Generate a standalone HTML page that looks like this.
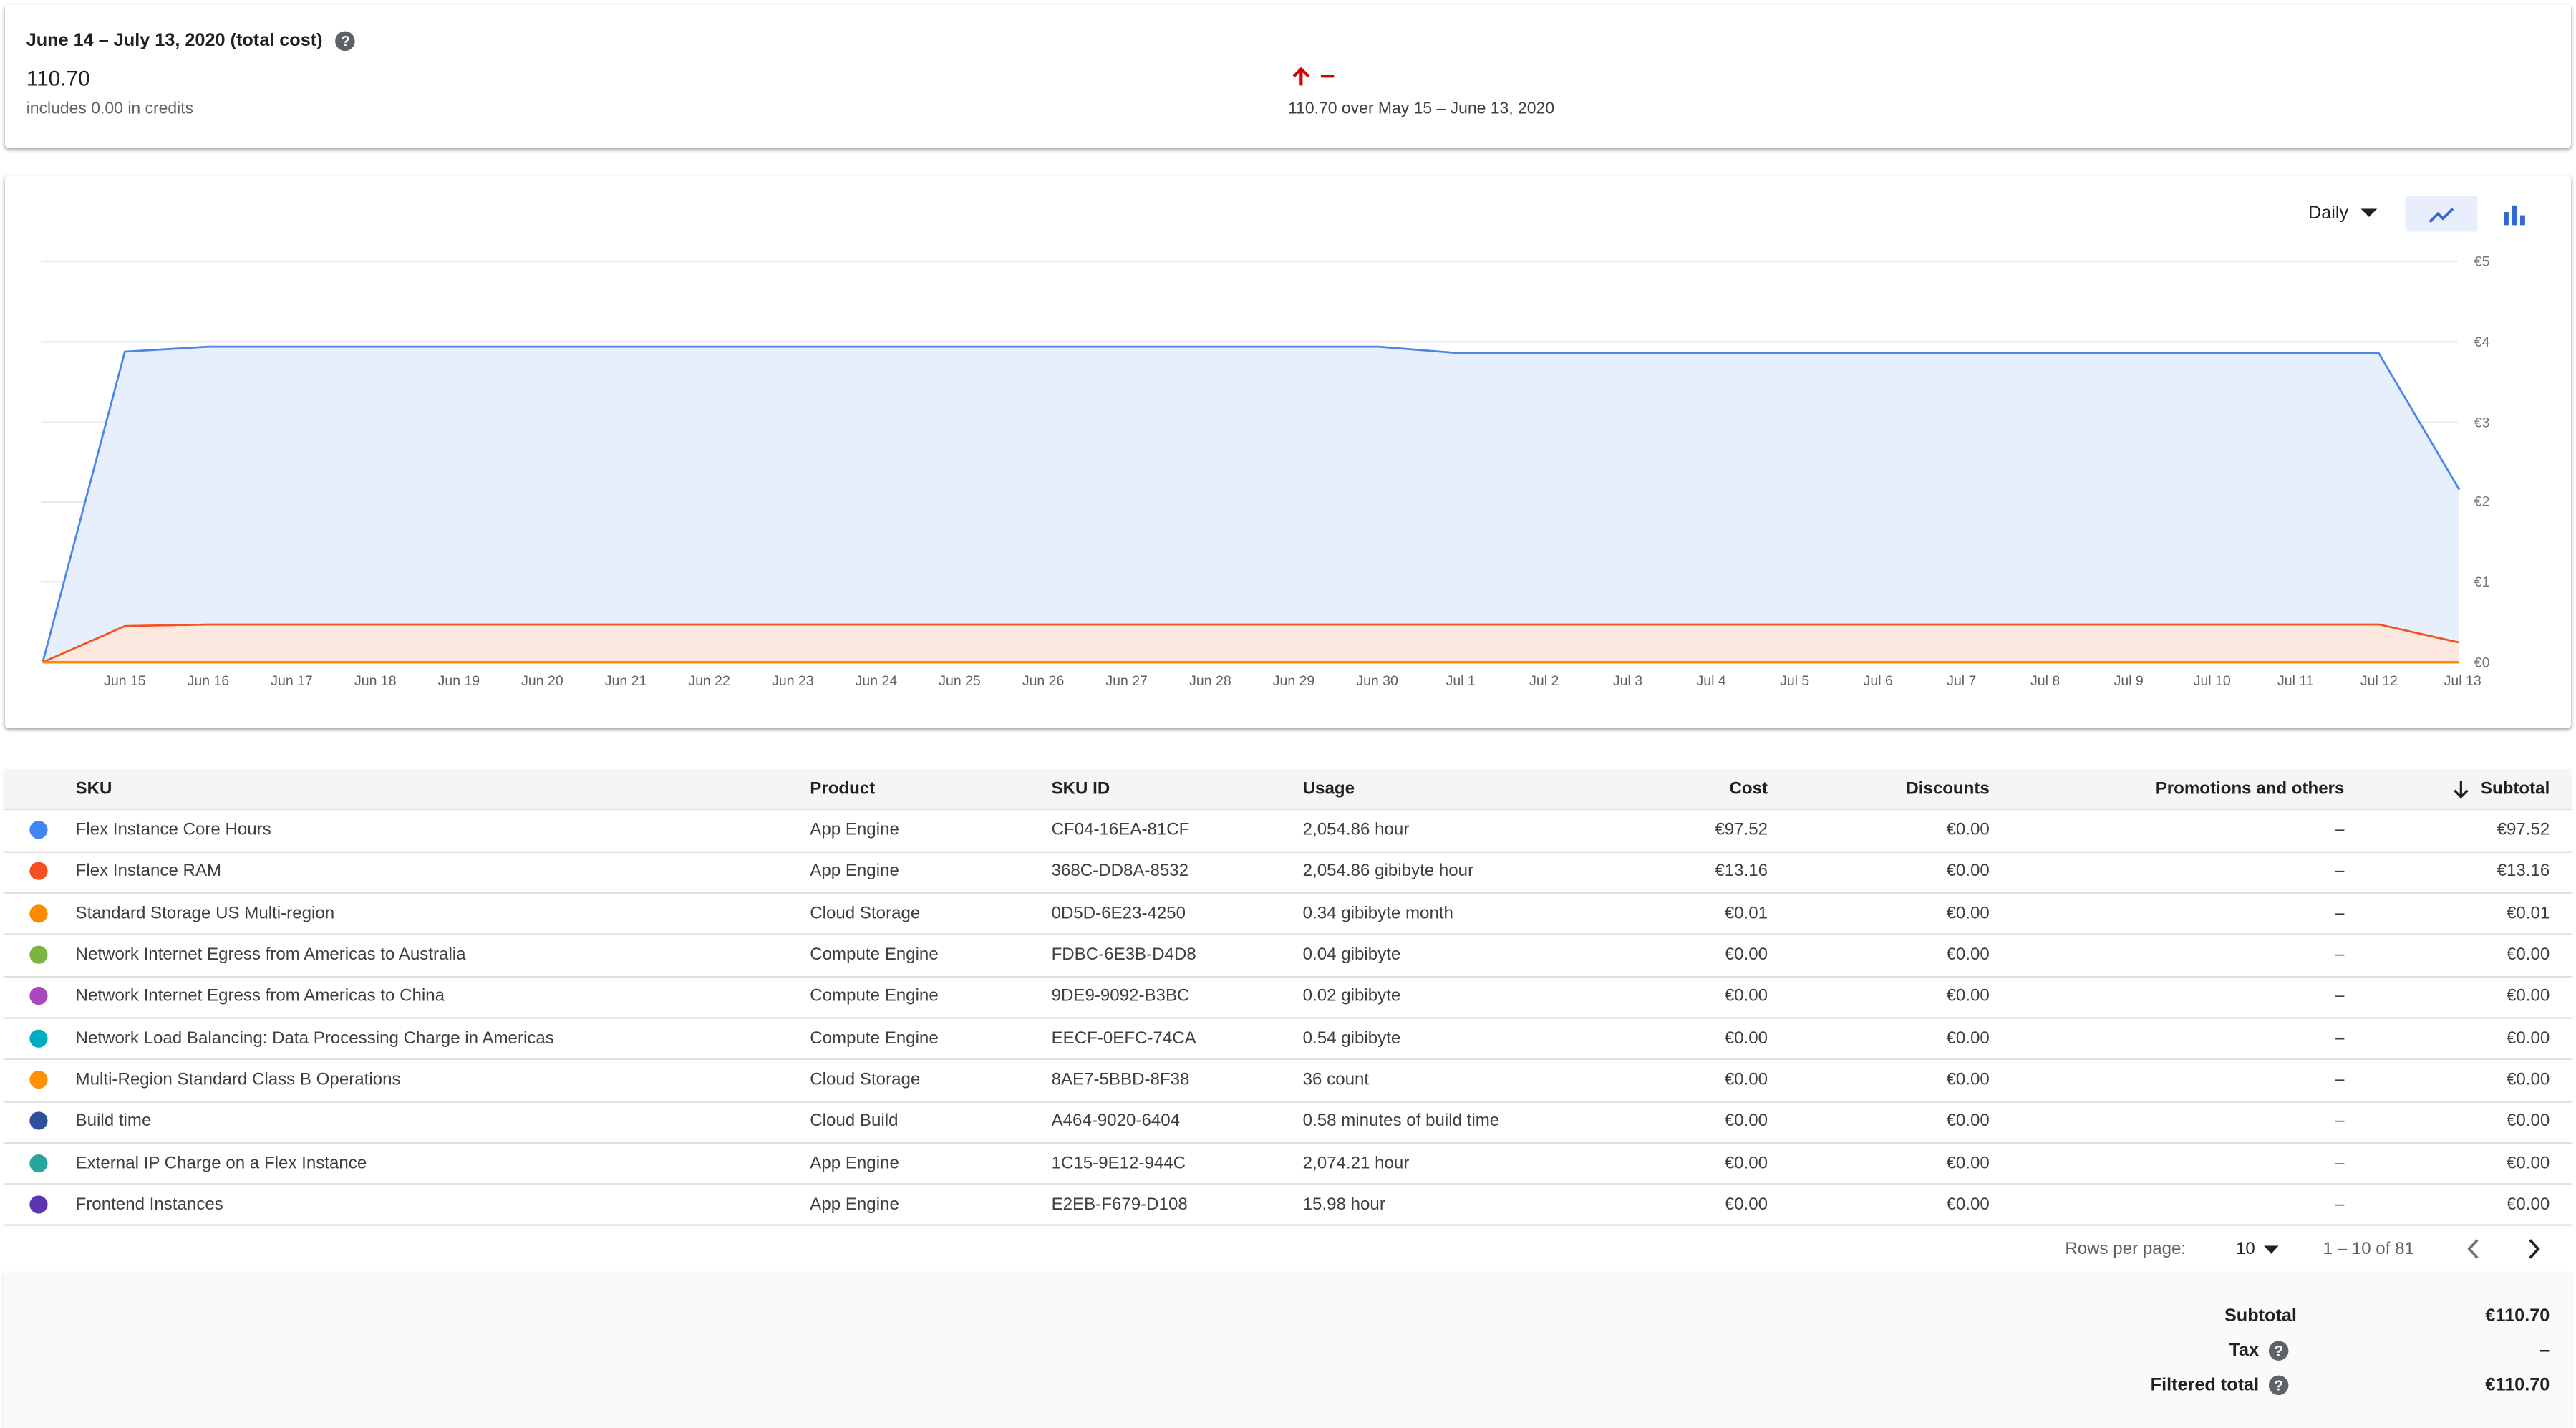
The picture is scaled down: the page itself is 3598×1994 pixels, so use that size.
<!DOCTYPE html>
<html><head><meta charset="utf-8"><style>
html,body{margin:0;padding:0;background:#fff;width:3598px;height:1994px;overflow:hidden}
#w{position:absolute;left:0;top:0;width:1568px;height:869px;transform:scale(2.29464);transform-origin:0 0;font-family:"Liberation Sans",Arial,sans-serif;color:#202124}
.a{position:absolute;white-space:nowrap}
.card{position:absolute;background:#fff;box-shadow:0 1px 2px rgba(0,0,0,.3),0 1px 3px rgba(0,0,0,.12);border-radius:2px}
.q{display:inline-block;width:12px;height:12px;border-radius:50%;background:#5f6368;color:#fff;font-size:9px;font-weight:bold;text-align:center;line-height:12px;vertical-align:middle;margin-left:6px}
.row{position:absolute;left:2px;width:1564px;height:25.3px;border-bottom:1px solid #e0e0e0;font-size:10.5px;color:#3c4043}
.row span,.hd span{position:absolute;top:50%;transform:translateY(-50%);white-space:nowrap}
.dot{width:11px;height:11px;border-radius:50%;left:16px}
.hd{position:absolute;left:2px;top:468px;width:1564px;height:24px;background:#f5f5f5;border-bottom:1px solid #e0e0e0;font-size:10.5px;font-weight:bold;color:#202124}
</style></head><body><div id="w">
<div class="card" style="left:3px;top:3px;width:1562px;height:87px"></div>
<div class="a" style="left:16px;top:19px;font-size:11px;font-weight:bold">June 14 – July 13, 2020 (total cost)<span class="q" style="margin-left:8px">?</span></div>
<div class="a" style="left:16px;top:40px;font-size:13px">110.70</div>
<div class="a" style="left:16px;top:61px;font-size:10px;color:#5f6368">includes 0.00 in credits</div>
<svg class="a" style="left:784px;top:40px" width="32" height="14"><path d="M8 12V2M3.5 6.5L8 2l4.5 4.5" stroke="#d50000" stroke-width="1.8" fill="none"/><path d="M20 6.5h8" stroke="#d50000" stroke-width="1.5"/></svg>
<div class="a" style="left:784px;top:61px;font-size:10px;color:#3c4043">110.70 over May 15 – June 13, 2020</div>

<div class="card" style="left:3px;top:107px;width:1562px;height:336px"></div>
<div class="a" style="left:1405px;top:124px;font-size:11px">Daily</div>
<svg class="a" style="left:1437px;top:127px" width="10" height="6"><path d="M0 0h10L5 5z" fill="#202124"/></svg>
<div class="a" style="left:1464px;top:119px;width:44px;height:22px;background:#e8eefb;border-radius:2px"></div>
<svg class="a" style="left:1478px;top:123px" width="16" height="14"><path d="M1 12l5-5 3 3 6-6" stroke="#3367d6" stroke-width="1.6" fill="none"/></svg>
<svg class="a" style="left:1522px;top:124px" width="16" height="14"><rect x="2" y="5" width="3" height="8" fill="#3367d6"/><rect x="7" y="1" width="3" height="12" fill="#3367d6"/><rect x="12" y="7" width="3" height="6" fill="#3367d6"/></svg>
<svg class="a" style="left:0;top:0" width="1568" height="440" font-family="Liberation Sans,Arial,sans-serif">
<g stroke="#e8e8e8" stroke-width="1"><line x1="25" y1="159" x2="1496" y2="159"/><line x1="25" y1="208" x2="1496" y2="208"/><line x1="25" y1="257" x2="1496" y2="257"/><line x1="25" y1="305.5" x2="1496" y2="305.5"/><line x1="25" y1="354" x2="1496" y2="354"/></g>
<g font-size="8.5" fill="#757575"><text x="1506" y="162">€5</text><text x="1506" y="211">€4</text><text x="1506" y="260">€3</text><text x="1506" y="308">€2</text><text x="1506" y="357">€1</text><text x="1506" y="406">€0</text></g>
<path d="M26 403L76 214L127 211L839 211L889 215L1448 215L1497 298L1497 403Z" fill="#e8effc"/>
<path d="M26 403L76 214L127 211L839 211L889 215L1448 215L1497 298" stroke="#4a86e8" stroke-width="1.2" fill="none"/>
<path d="M26 403L76 381L127 380L1448 380L1497 391L1497 403Z" fill="#fde8e0"/>
<path d="M26 403L76 381L127 380L1448 380L1497 391" stroke="#f4511e" stroke-width="1.2" fill="none"/>
<line x1="26" y1="403" x2="1497" y2="403" stroke="#fb8c00" stroke-width="1.5"/>
<g font-size="8.5" fill="#616161" text-anchor="middle">
<text x="76" y="417">Jun 15</text><text x="126.8" y="417">Jun 16</text><text x="177.6" y="417">Jun 17</text><text x="228.5" y="417">Jun 18</text><text x="279.3" y="417">Jun 19</text><text x="330.1" y="417">Jun 20</text><text x="380.9" y="417">Jun 21</text><text x="431.7" y="417">Jun 22</text><text x="482.6" y="417">Jun 23</text><text x="533.4" y="417">Jun 24</text><text x="584.2" y="417">Jun 25</text><text x="635" y="417">Jun 26</text><text x="685.8" y="417">Jun 27</text><text x="736.7" y="417">Jun 28</text><text x="787.5" y="417">Jun 29</text><text x="838.3" y="417">Jun 30</text><text x="889.1" y="417">Jul 1</text><text x="939.9" y="417">Jul 2</text><text x="990.8" y="417">Jul 3</text><text x="1041.6" y="417">Jul 4</text><text x="1092.4" y="417">Jul 5</text><text x="1143.2" y="417">Jul 6</text><text x="1194" y="417">Jul 7</text><text x="1244.9" y="417">Jul 8</text><text x="1295.7" y="417">Jul 9</text><text x="1346.5" y="417">Jul 10</text><text x="1397.3" y="417">Jul 11</text><text x="1448.1" y="417">Jul 12</text><text x="1499" y="417">Jul 13</text></g>
</svg>

<div class="hd"><span style="left:44px">SKU</span><span style="left:491px">Product</span><span style="left:638px">SKU ID</span><span style="left:791px">Usage</span><span style="right:490px">Cost</span><span style="right:355px">Discounts</span><span style="right:139px">Promotions and others</span><span style="right:14px">Subtotal</span>
<svg style="position:absolute;left:1491px;top:6px" width="10" height="12"><path d="M5 1v10M1 7l4 4 4-4" stroke="#202124" stroke-width="1.4" fill="none"/></svg></div>

<div class="row" style="top:492.5px"><span class="dot" style="background:#4285f4"></span><span style="left:44px">Flex Instance Core Hours</span><span style="left:491px">App Engine</span><span style="left:638px">CF04-16EA-81CF</span><span style="left:791px">2,054.86 hour</span><span style="right:490px">€97.52</span><span style="right:355px">€0.00</span><span style="right:139px">–</span><span style="right:14px">€97.52</span></div>
<div class="row" style="top:517.8px"><span class="dot" style="background:#f4511e"></span><span style="left:44px">Flex Instance RAM</span><span style="left:491px">App Engine</span><span style="left:638px">368C-DD8A-8532</span><span style="left:791px">2,054.86 gibibyte hour</span><span style="right:490px">€13.16</span><span style="right:355px">€0.00</span><span style="right:139px">–</span><span style="right:14px">€13.16</span></div>
<div class="row" style="top:543.1px"><span class="dot" style="background:#fb8c00"></span><span style="left:44px">Standard Storage US Multi-region</span><span style="left:491px">Cloud Storage</span><span style="left:638px">0D5D-6E23-4250</span><span style="left:791px">0.34 gibibyte month</span><span style="right:490px">€0.01</span><span style="right:355px">€0.00</span><span style="right:139px">–</span><span style="right:14px">€0.01</span></div>
<div class="row" style="top:568.4px"><span class="dot" style="background:#7cb342"></span><span style="left:44px">Network Internet Egress from Americas to Australia</span><span style="left:491px">Compute Engine</span><span style="left:638px">FDBC-6E3B-D4D8</span><span style="left:791px">0.04 gibibyte</span><span style="right:490px">€0.00</span><span style="right:355px">€0.00</span><span style="right:139px">–</span><span style="right:14px">€0.00</span></div>
<div class="row" style="top:593.7px"><span class="dot" style="background:#ab47bc"></span><span style="left:44px">Network Internet Egress from Americas to China</span><span style="left:491px">Compute Engine</span><span style="left:638px">9DE9-9092-B3BC</span><span style="left:791px">0.02 gibibyte</span><span style="right:490px">€0.00</span><span style="right:355px">€0.00</span><span style="right:139px">–</span><span style="right:14px">€0.00</span></div>
<div class="row" style="top:619px"><span class="dot" style="background:#00acc1"></span><span style="left:44px">Network Load Balancing: Data Processing Charge in Americas</span><span style="left:491px">Compute Engine</span><span style="left:638px">EECF-0EFC-74CA</span><span style="left:791px">0.54 gibibyte</span><span style="right:490px">€0.00</span><span style="right:355px">€0.00</span><span style="right:139px">–</span><span style="right:14px">€0.00</span></div>
<div class="row" style="top:644.3px"><span class="dot" style="background:#ff8f00"></span><span style="left:44px">Multi-Region Standard Class B Operations</span><span style="left:491px">Cloud Storage</span><span style="left:638px">8AE7-5BBD-8F38</span><span style="left:791px">36 count</span><span style="right:490px">€0.00</span><span style="right:355px">€0.00</span><span style="right:139px">–</span><span style="right:14px">€0.00</span></div>
<div class="row" style="top:669.6px"><span class="dot" style="background:#2f4f9a"></span><span style="left:44px">Build time</span><span style="left:491px">Cloud Build</span><span style="left:638px">A464-9020-6404</span><span style="left:791px">0.58 minutes of build time</span><span style="right:490px">€0.00</span><span style="right:355px">€0.00</span><span style="right:139px">–</span><span style="right:14px">€0.00</span></div>
<div class="row" style="top:694.9px"><span class="dot" style="background:#26a69a"></span><span style="left:44px">External IP Charge on a Flex Instance</span><span style="left:491px">App Engine</span><span style="left:638px">1C15-9E12-944C</span><span style="left:791px">2,074.21 hour</span><span style="right:490px">€0.00</span><span style="right:355px">€0.00</span><span style="right:139px">–</span><span style="right:14px">€0.00</span></div>
<div class="row" style="top:720.2px"><span class="dot" style="background:#5e35b1"></span><span style="left:44px">Frontend Instances</span><span style="left:491px">App Engine</span><span style="left:638px">E2EB-F679-D108</span><span style="left:791px">15.98 hour</span><span style="right:490px">€0.00</span><span style="right:355px">€0.00</span><span style="right:139px">–</span><span style="right:14px">€0.00</span></div>

<div class="a" style="left:1257px;top:754px;font-size:10.5px;color:#5f6368">Rows per page:</div>
<div class="a" style="left:1361px;top:754px;font-size:10.5px;color:#202124">10</div>
<svg class="a" style="left:1378px;top:758px" width="9" height="5"><path d="M0 0h9L4.5 5z" fill="#202124"/></svg>
<div class="a" style="left:1414px;top:754px;font-size:10.5px;color:#5f6368">1 – 10 of 81</div>
<svg class="a" style="left:1501px;top:753px" width="10" height="14"><path d="M7 1.5L2 7l5 5.5" stroke="#757575" stroke-width="1.6" fill="none"/></svg>
<svg class="a" style="left:1537px;top:753px" width="10" height="14"><path d="M3 1.5L8 7l-5 5.5" stroke="#202124" stroke-width="1.6" fill="none"/></svg>

<div class="a" style="left:2px;top:774px;width:1563px;height:95px;background:#fafafa;box-shadow:0 1px 2px rgba(0,0,0,.15)"></div>
<div class="a" style="right:170px;top:795px;font-size:11px;font-weight:bold">Subtotal</div>
<div class="a" style="right:16px;top:795px;font-size:11px;font-weight:bold">€110.70</div>
<div class="a" style="right:175px;top:816px;font-size:11px;font-weight:bold">Tax<span class="q">?</span></div>
<div class="a" style="right:16px;top:816px;font-size:11px;font-weight:bold">–</div>
<div class="a" style="right:175px;top:837px;font-size:11px;font-weight:bold">Filtered total<span class="q">?</span></div>
<div class="a" style="right:16px;top:837px;font-size:11px;font-weight:bold">€110.70</div>
</div></body></html>
